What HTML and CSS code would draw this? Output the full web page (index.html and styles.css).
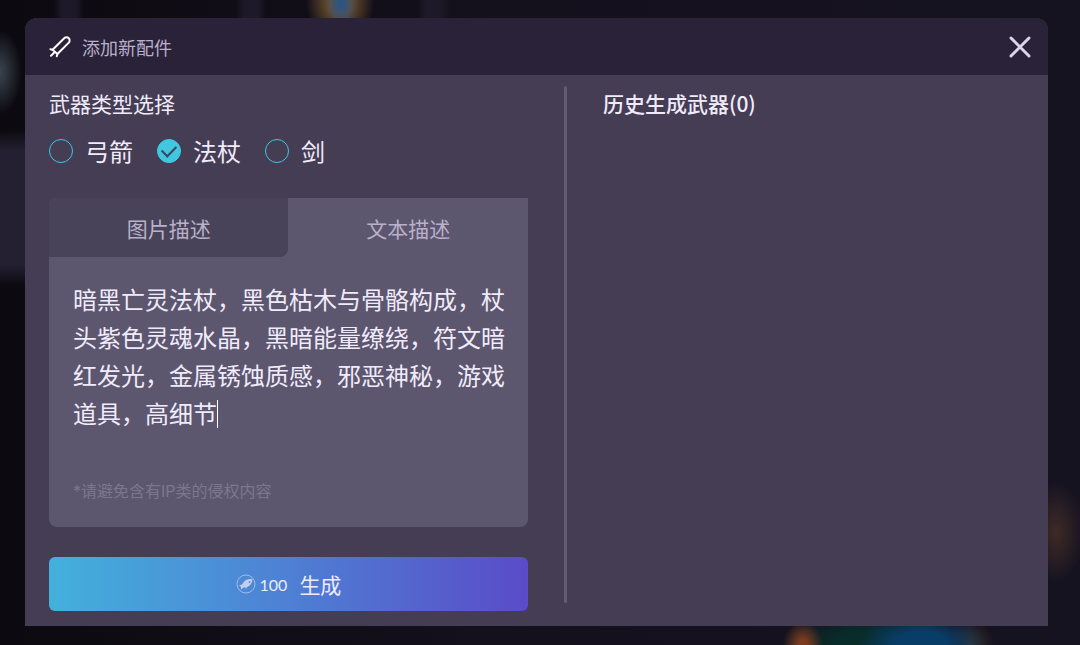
FILE: index.html
```html
<!DOCTYPE html>
<html lang="zh-CN">
<head>
    <meta charset="UTF-8">
    <meta name="viewport" content="width=device-width, initial-scale=1.0">
    <title>添加新配件</title>
    <link rel="stylesheet" href="styles.css">
</head>
<body>
    <div class="modal" role="dialog" aria-labelledby="modalTitle">

        <header class="modal-header">
            <svg class="sword-icon" viewBox="0 0 24 24" width="24" height="24" aria-hidden="true">
                <path d="M4.6 14.8 16.2 3.2Q17.2 2.2 18.6 2.2 19.8 2.2 20.8 3.2 21.8 4.2 21.6 5.8 21.5 6.8 20.8 7.6L9.4 19"/>
                <path d="M2.4 14.2 4.6 14.8 9.4 19 8.8 21.2M6 17.8 3 20.8"/>
            </svg>
            <h1 id="modalTitle">添加新配件</h1>
            <button class="close-button" type="button" aria-label="关闭">
                <svg viewBox="0 0 24 24" width="24" height="24" aria-hidden="true">
                    <path d="M3 3 21 21M21 3 3 21"/>
                </svg>
            </button>
        </header>

        <div class="modal-body">
            <form class="editor">
                <fieldset class="weapon-types">
                    <legend>武器类型选择</legend>
                    <div class="options">
                        <label><input type="radio" name="weapon" value="bow">弓箭</label>
                        <label><input type="radio" name="weapon" value="staff" checked>法杖</label>
                        <label><input type="radio" name="weapon" value="sword">剑</label>
                    </div>
                </fieldset>

                <div class="description">
                    <div class="tabs" role="tablist">
                        <button class="tab" type="button" role="tab" aria-selected="false">图片描述</button>
                        <button class="tab active" type="button" role="tab" aria-selected="true">文本描述</button>
                    </div>
                    <div class="panel" role="tabpanel">
                        <div class="prompt-box">
                            <textarea id="prompt" rows="4" aria-label="文本描述" spellcheck="false">暗黑亡灵法杖，黑色枯木与骨骼构成，杖头紫色灵魂水晶，黑暗能量缭绕，符文暗红发光，金属锈蚀质感，邪恶神秘，游戏道具，高细节</textarea>
                            <span class="caret"></span>
                        </div>
                        <p class="hint">*请避免含有IP类的侵权内容</p>
                    </div>
                </div>

                <button class="generate-button" type="button">
                    <svg class="coin-icon" viewBox="0 0 20 20" width="20" height="20" aria-hidden="true">
                        <circle cx="10" cy="10" r="9"/>
                        <path fill-rule="evenodd" d="M16.4 5.2C13 4.5 9.6 5.5 7.6 8.2L6 10.6 3 11.4 4.9 12.8 5 15.6 7.6 13.4 9.2 13.2 9.8 14.8 11.6 12.8C14.8 11.4 16.4 8.6 16.4 5.2ZM13.6 7.2a.9.9 0 1 0 .02 0Z"/>
                    </svg>
                    <span class="cost">100</span>
                    <span>生成</span>
                </button>
            </form>

            <div class="divider"></div>

            <section class="history">
                <h2>历史生成武器(0)</h2>
            </section>
        </div>
    </div>
</body>
</html>
```
FILE: styles.css
```css
:root {
    --page-bg: #14101c;
    --header-bg: #292239;
    --modal-bg: #443d54;
    --panel-bg: #5c566f;
    --tab-bg: #494359;
    --text: #f0ebfa;
    --text-soft: #b9b0cb;
    --text-muted: #7d7690;
    --accent: #40c8e0;
}

* {
    box-sizing: border-box;
}

body {
    display: flex;
    min-height: 100vh;
    margin: 0;
    padding: 18px 32px 19px 25px;
    font-family: "Noto Sans CJK SC", sans-serif;
    font-weight: 400;
    color: var(--text);
    /* blurred game scene behind the dialog */
    background:
        radial-gradient(ellipse 16px 24px at 341px 4px, #2c5486 10%, transparent),
        radial-gradient(ellipse 34px 40px at 340px 2px, #6b512f 30%, transparent),
        radial-gradient(ellipse 22px 42px at 0 72px, #3c444e, transparent),
        radial-gradient(ellipse 20px 24px at 803px 100%, #7c3b20 20%, transparent),
        radial-gradient(ellipse 64px 34px at 922px 100%, #083d67 40%, transparent),
        radial-gradient(ellipse 24px 26px at 970px 100%, #38332e, transparent),
        radial-gradient(ellipse 90px 36px at 870px 100%, #082c29 40%, transparent),
        radial-gradient(ellipse 28px 50px at 1056px 532px, #3e2b25, transparent),
        linear-gradient(transparent 130px, #241f31 150px, #241f31 265px, transparent 285px) 0 0 / 25px 100% no-repeat,
        linear-gradient(90deg, transparent 54px, #1d1928 62px, #1d1928 76px, transparent 84px, transparent 236px, #1d1928 244px, #1d1928 258px, transparent 266px, transparent 418px, #1d1928 426px, #1d1928 440px, transparent 450px) 0 0 / 100% 18px no-repeat,
        linear-gradient(90deg, #0c0a10, #14101c 45%, #161321);
    background-color: var(--page-bg);
}

h1, h2, p {
    margin: 0;
    font-weight: 400;
}

button, input, textarea {
    margin: 0;
    font: inherit;
    color: inherit;
}

button {
    padding: 0;
    border: none;
    background: none;
    cursor: pointer;
}

.modal {
    display: flex;
    flex: 1;
    flex-direction: column;
    min-width: 0;
    border-radius: 12px 12px 0 0;
    background-color: var(--modal-bg);
}

.modal-header {
    display: flex;
    align-items: center;
    gap: 10px;
    height: 57px;
    padding: 0 16px 0 23px;
    border-radius: 12px 12px 0 0;
    background-color: var(--header-bg);
}

.modal-header h1 {
    font-size: 18px;
    color: var(--text-soft);
}

.sword-icon {
    fill: none;
    stroke: #fff;
    stroke-width: 2;
    stroke-linecap: round;
    stroke-linejoin: round;
}

.close-button {
    display: flex;
    margin-left: auto;
}

.close-button svg {
    stroke: #dcd4ea;
    stroke-width: 3;
    stroke-linecap: round;
}

.modal-body {
    display: grid;
    flex: 1;
    grid-template-columns: minmax(0, 8fr) 3px minmax(0, 7fr);
    column-gap: 36px;
    padding: 11px 26px 15px 24px;
}

.editor {
    display: flex;
    flex-direction: column;
    gap: 30px;
}

.weapon-types {
    min-width: 0;
    margin: 0;
    padding: 0;
    border: none;
}

.weapon-types legend,
.history h2 {
    padding: 0;
    font-size: 21px;
    line-height: 34px;
}

.options {
    display: flex;
    gap: 24px;
    padding: 16px 0 2px;
}

.options label {
    display: flex;
    align-items: center;
    gap: 12px;
    font-size: 24px;
    line-height: 30px;
}

.options input {
    width: 24px;
    height: 24px;
    border: 1px solid var(--accent);
    border-radius: 50%;
    appearance: none;
}

.options input:checked {
    display: grid;
    place-items: center;
    background-color: var(--accent);
}

.options input:checked::after {
    content: "";
    width: 12px;
    height: 7px;
    margin-bottom: 4px;
    border: solid #3d4560;
    border-width: 0 0 2px 2px;
    transform: rotate(-45deg);
}

.description {
    display: flex;
    flex: 1;
    flex-direction: column;
    border-radius: 8px 0 8px 8px;
    background-color: var(--panel-bg);
}

.tabs {
    display: grid;
    grid-template-columns: 1fr 1fr;
}

.tab {
    height: 59px;
    font-size: 21px;
    color: var(--text-soft);
    background-color: var(--tab-bg);
    border-radius: 8px 0 8px 0;
}

.tab.active {
    background-color: transparent;
}

.panel {
    display: flex;
    flex: 1;
    flex-direction: column;
    justify-content: space-between;
    padding: 23px 20px 24px 24px;
}

.prompt-box {
    position: relative;
}

.panel textarea {
    display: block;
    width: 100%;
    padding: 0;
    border: none;
    outline: none;
    resize: none;
    overflow: hidden;
    font-size: 24px;
    line-height: 38px;
    background: none;
}

/* sits after the sixth character of the last line */
.caret {
    position: absolute;
    left: 144px;
    bottom: 4px;
    width: 1px;
    height: 28px;
    background-color: #fff;
    pointer-events: none;
}

.hint {
    font-family: Inter, "Noto Sans CJK SC", sans-serif;
    font-size: 16px;
    line-height: 24px;
    color: var(--text-muted);
}

.generate-button {
    display: flex;
    align-items: center;
    justify-content: center;
    height: 54px;
    border-radius: 6px;
    font-size: 21px;
    background: linear-gradient(90deg, #43b1dc, #4e80d4 50%, #5a4bc8);
}

.coin-icon {
    fill: #c5cdee;
}

.coin-icon circle {
    fill: none;
    stroke: #a3bce9;
    stroke-width: 1;
}

.cost {
    margin: 0 12px 0 4px;
    font-family: Lato, sans-serif;
    font-size: 16px;
}

.divider {
    margin-bottom: 8px;
    border-radius: 2px;
    background-color: #625b73;
}

.history h2 {
    font-weight: 500;
}
```
